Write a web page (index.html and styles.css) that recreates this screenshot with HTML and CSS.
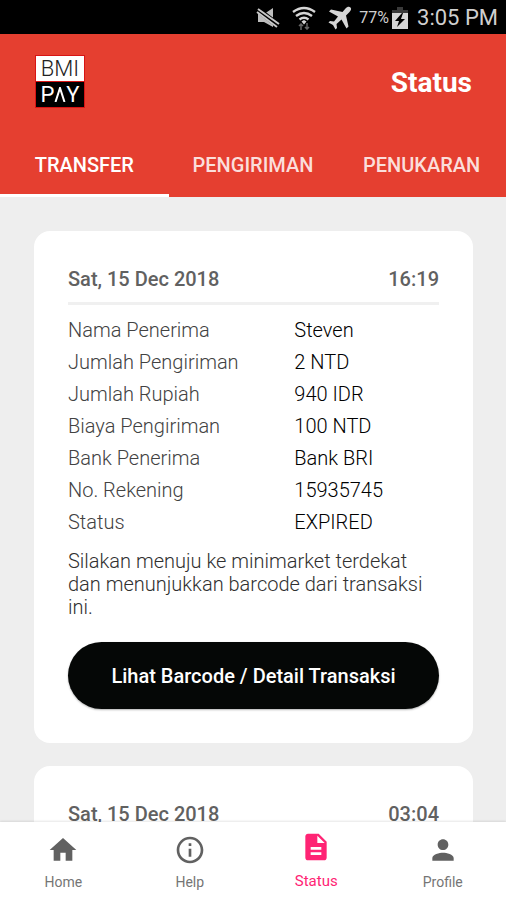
FILE: index.html
```html
<!DOCTYPE html>
<html lang="id">
<head>
<meta charset="utf-8">
<meta name="viewport" content="width=device-width, initial-scale=1">
<title>BMI Pay - Status</title>
<link rel="stylesheet" href="styles.css">
</head>
<body>
<div class="device-bar">
  <svg class="device-icon mute" viewBox="0 0 24 24" aria-hidden="true"><path d="M2 8h6l9-6v19l-9-5H2z" fill="#bdbdbd"/><path d="M1 3l22 17" stroke="#000" stroke-width="6"/><path d="M2 3l21 15M1 6l20 15" stroke="#c8c8c8" stroke-width="2"/></svg>
  <svg class="device-icon wifi" viewBox="0 0 24 24" aria-hidden="true"><g fill="none" stroke="#d6d6d6" stroke-width="2.4"><path d="M1 6q11-8 22 0M4 10q8-6 16 0M7.500 13.500q4.500-3.500 9 0"/></g><path d="M9.500 15.500l2.500-1.500 2.500 1.500-2.500 3z" fill="#d6d6d6"/><path d="M9 24v-6m-2 2 2-2 2 2M15 17v6m-2-2 2 2 2-2" fill="none" stroke="#666" stroke-width="1.500"/></svg>
  <svg class="device-icon plane" viewBox="0 0 24 24" aria-hidden="true"><path d="M22.500 1.500c-1.500-1.300-3.500-.5-5 1L14.500 6 3 3.500 1 5.500l9 5-4 5-4-.5-1.500 1.500 4.500 2.500 2.500 4.500L9 22l-.5-4 5-4.500 5 9 2-2L18 9.500l3.500-3.500c1.500-1.500 2.200-3.300 1-4.500z" fill="#d6d6d6"/></svg>
  <span class="battery-level">77%</span>
  <svg class="battery" viewBox="0 0 18 24" aria-hidden="true"><path d="M6 1h6v3h5v6H1V4h5z" fill="#3a3a3a"/><path d="M1 7h16v16H1z" fill="#d6d6d6"/><path d="M11 7l-7 8h4l-2 6 8-8h-4l2-6z" fill="#000"/></svg>
  <span class="clock">3:05 PM</span>
</div>

<header class="header">
  <div class="title-row">
    <div class="logo">
      <span class="logo-top">BMI</span>
      <span class="logo-bottom">P<svg class="logo-a" viewBox="0 0 12 15" role="img" aria-label="A"><path d="M1.500 15 6 1l4.500 14" fill="none" stroke="#fff" stroke-width="2"/></svg>Y</span>
    </div>
    <h1 class="title">Status</h1>
  </div>
  <nav class="tabs" aria-label="Transaksi">
    <a class="tab tab-active" href="#transfer" aria-current="page">TRANSFER</a>
    <a class="tab" href="#pengiriman">PENGIRIMAN</a>
    <a class="tab" href="#penukaran">PENUKARAN</a>
  </nav>
</header>

<main class="content">
  <article class="card">
    <div class="card-head"><time>Sat, 15 Dec 2018</time><time>16:19</time></div>
    <table class="details">
      <tr><th scope="row">Nama Penerima</th><td>Steven</td></tr>
      <tr><th scope="row">Jumlah Pengiriman</th><td>2 NTD</td></tr>
      <tr><th scope="row">Jumlah Rupiah</th><td>940 IDR</td></tr>
      <tr><th scope="row">Biaya Pengiriman</th><td>100 NTD</td></tr>
      <tr><th scope="row">Bank Penerima</th><td>Bank BRI</td></tr>
      <tr><th scope="row">No. Rekening</th><td>15935745</td></tr>
      <tr><th scope="row">Status</th><td>EXPIRED</td></tr>
    </table>
    <p class="note">Silakan menuju ke minimarket terdekat dan menunjukkan barcode dari transaksi ini.</p>
    <button class="action" type="button">Lihat Barcode / Detail Transaksi</button>
  </article>
  <article class="card">
    <div class="card-head"><time>Sat, 15 Dec 2018</time><time>03:04</time></div>
  </article>
</main>

<nav class="bottom-nav" aria-label="Menu">
  <a class="nav-item" href="#home"><svg class="nav-icon" viewBox="0 0 24 24" aria-hidden="true"><path d="M10 20v-6h4v6h5v-8h3L12 3 2 12h3v8z"/></svg>Home</a>
  <a class="nav-item" href="#help"><svg class="nav-icon" viewBox="0 0 24 24" aria-hidden="true"><path d="M11 17h2v-6h-2v6zm1-15C6.480 2 2 6.480 2 12s4.480 10 10 10 10-4.480 10-10S17.520 2 12 2zm0 18c-4.410 0-8-3.590-8-8s3.590-8 8-8 8 3.590 8 8-3.590 8-8 8zM11 9h2V7h-2v2z"/></svg>Help</a>
  <a class="nav-item nav-active" href="#status" aria-current="page"><svg class="nav-icon" viewBox="0 0 24 24" aria-hidden="true"><path d="M14 2H6c-1.100 0-2 .9-2 2v16c0 1.100.9 2 2 2h12c1.100 0 2-.9 2-2V8l-6-6zm2 16H8v-2h8v2zm0-4H8v-2h8v2zm-3-5V3.500L18.500 9H13z"/></svg>Status</a>
  <a class="nav-item" href="#profile"><svg class="nav-icon" viewBox="0 0 24 24" aria-hidden="true"><path d="M12 12c2.210 0 4-1.790 4-4s-1.790-4-4-4-4 1.790-4 4 1.790 4 4 4zm0 2c-2.670 0-8 1.340-8 4v2h16v-2c0-2.660-5.330-4-8-4z"/></svg>Profile</a>
</nav>
</body>
</html>
```
FILE: styles.css
```css
* {
  box-sizing: border-box;
}

body {
  margin: 0;
  height: 100vh;
  display: flex;
  flex-direction: column;
  background: #eeeeee;
  font-family: Roboto, "Liberation Sans", sans-serif;
  overflow: hidden;
}

a {
  color: inherit;
  text-decoration: none;
}

.device-bar {
  flex: none;
  display: flex;
  align-items: center;
  justify-content: flex-end;
  height: 34px;
  padding: 2px 8px 0;
  background: #000;
  color: #cfcfcf;
}

.device-icon {
  width: 24px;
  height: 24px;
  margin-right: 12px;
}

.plane {
  margin-right: 7px;
}

.battery-level {
  font-size: 16px;
  line-height: 24px;
}

.battery {
  width: 18px;
  height: 24px;
  margin: 0 8px 0 2px;
}

.clock {
  font-size: 22px;
  line-height: 24px;
}

.header {
  flex: none;
  background: #e53f30;
  color: #fff;
}

.title-row {
  display: flex;
  align-items: center;
  justify-content: space-between;
  height: 98px;
  padding: 0 34px;
}

.logo {
  width: 50px;
  margin: 0 0 4px 1px;
  border: 1px solid #d81414;
  font-size: 22px;
  line-height: 25px;
}

.logo-top,
.logo-bottom {
  display: flex;
  justify-content: center;
}

.logo-top {
  background: #fff;
  color: #222;
  border-bottom: 1px solid #d81414;
  font-weight: 300;
}

.logo-bottom {
  background: #000;
  color: #fff;
  align-items: center;
}

.logo-a {
  width: 12px;
  height: 15px;
}

.title {
  margin: 0;
  font-size: 28px;
  font-weight: 700;
  line-height: 32px;
}

.tabs {
  display: grid;
  grid-template-columns: repeat(3, 1fr);
}

.tab {
  height: 65px;
  border-bottom: 3px solid transparent;
  font-size: 20px;
  font-weight: 500;
  line-height: 66px;
  text-align: center;
  color: #fbdedb;
}

.tab-active {
  color: #fff;
  border-color: #fff;
}

.content {
  flex: 1;
  min-height: 0;
  overflow: hidden;
  padding: 34px 33px 0 34px;
}

.card {
  margin-bottom: 23px;
  padding: 34px;
  border-radius: 16px;
  background: #fff;
}

.card-head {
  display: flex;
  justify-content: space-between;
  padding-bottom: 9px;
  border-bottom: 3px solid #f0f0f0;
  color: #616161;
  font-size: 20px;
  font-weight: 500;
  line-height: 28px;
}

.details {
  width: 100%;
  margin: 9px 0 12px;
  border-collapse: collapse;
  table-layout: fixed;
  font-size: 20px;
  line-height: 32px;
}

.details th,
.details td {
  padding: 0;
  text-align: left;
  font-weight: 300;
}

.details th {
  width: 61%;
  color: #424242;
}

.details td {
  color: #000;
}

.note {
  margin: 0 0 23px;
  color: #303030;
  font-size: 20px;
  font-weight: 300;
  line-height: 23px;
}

.action {
  display: block;
  width: 100%;
  height: 67px;
  padding: 0;
  border: 0;
  border-radius: 34px;
  background: #050706;
  box-shadow: 0 1px 2px #0000004d;
  color: #fff;
  font: 500 20px/24px Roboto, "Liberation Sans", sans-serif;
}

.bottom-nav {
  flex: none;
  display: grid;
  grid-template-columns: repeat(4, 1fr);
  height: 78px;
  background: #fff;
  box-shadow: 0 -1px 2px #0000001a;
}

.nav-item {
  display: flex;
  flex-direction: column;
  align-items: center;
  padding-top: 12px;
  color: #757575;
  font-size: 14px;
  line-height: 16px;
}

.nav-icon {
  width: 32px;
  height: 32px;
  margin-bottom: 8px;
  fill: #616161;
}

.nav-active {
  padding-top: 9px;
  color: #ff2474;
  font-size: 15px;
}

.nav-active .nav-icon {
  margin-bottom: 10px;
  fill: #ff2474;
}
```
